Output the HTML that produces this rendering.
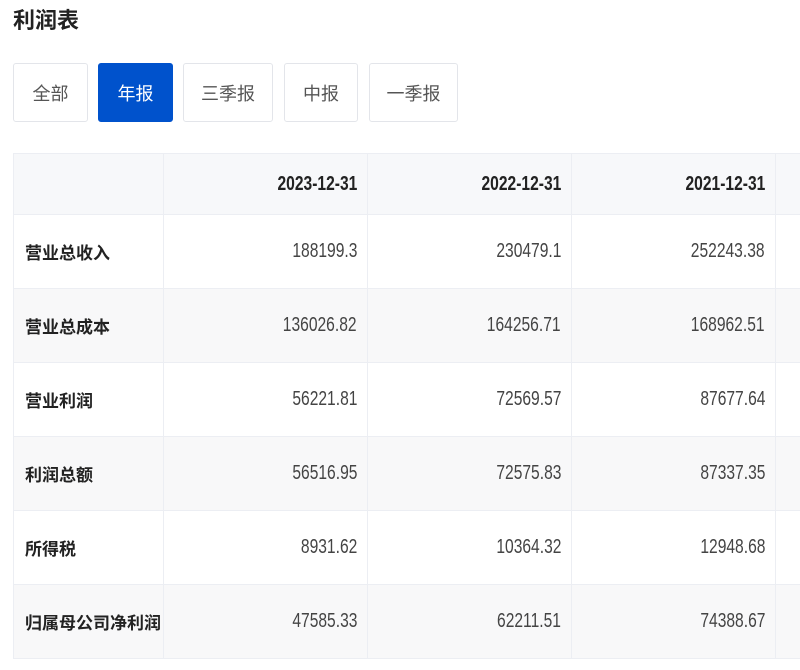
<!DOCTYPE html>
<html><head><meta charset="utf-8"><style>
body{margin:0;width:800px;height:670px;overflow:hidden;background:#fff;font-family:"Liberation Sans","Noto Sans CJK SC",sans-serif;color:#222;position:relative}
h1{position:absolute;left:13px;top:3px;margin:0;font-size:22px;font-weight:bold;color:#222}
.b{position:absolute;top:63px;border:1px solid #e3e5ea;border-radius:3px;box-sizing:border-box;height:59px;display:flex;align-items:center;justify-content:center;font-size:18px;color:#555}
.b.on{background:#0052cc;border-color:#0052cc;color:#fff}
table{position:absolute;left:13px;top:153px;border-collapse:collapse;table-layout:fixed;width:822px}
td{border:1px solid #eceef3;padding:0 10px;text-align:right;font-size:20px;color:#444;white-space:nowrap;overflow:hidden}
td span{display:inline-block;transform:scaleX(.78);transform-origin:right center}
tr.h td{height:60px;background:#f7f8fa;font-weight:bold;color:#222}
tr.r td{height:73px}
tr.g td{background:#f8f8f9}
td.l{text-align:left;font-weight:bold;color:#222;font-size:17px;padding-left:11px}
</style></head><body>
<h1>利润表</h1>
<div class="b" style="left:13px;width:75px">全部</div>
<div class="b on" style="left:98px;width:75px">年报</div>
<div class="b" style="left:183px;width:90px">三季报</div>
<div class="b" style="left:284px;width:74px">中报</div>
<div class="b" style="left:369px;width:89px">一季报</div>
<table>
<colgroup><col style="width:150px"><col style="width:204px"><col style="width:204px"><col style="width:204px"><col style="width:60px"></colgroup>
<tr class="h"><td class="l"></td><td><span>2023-12-31</span></td><td><span>2022-12-31</span></td><td><span>2021-12-31</span></td><td></td></tr>
<tr class="r"><td class="l">营业总收入</td><td><span>188199.3</span></td><td><span>230479.1</span></td><td><span>252243.38</span></td><td></td></tr>
<tr class="r g"><td class="l">营业总成本</td><td><span>136026.82</span></td><td><span>164256.71</span></td><td><span>168962.51</span></td><td></td></tr>
<tr class="r"><td class="l">营业利润</td><td><span>56221.81</span></td><td><span>72569.57</span></td><td><span>87677.64</span></td><td></td></tr>
<tr class="r g"><td class="l">利润总额</td><td><span>56516.95</span></td><td><span>72575.83</span></td><td><span>87337.35</span></td><td></td></tr>
<tr class="r"><td class="l">所得税</td><td><span>8931.62</span></td><td><span>10364.32</span></td><td><span>12948.68</span></td><td></td></tr>
<tr class="r g"><td class="l">归属母公司净利润</td><td><span>47585.33</span></td><td><span>62211.51</span></td><td><span>74388.67</span></td><td></td></tr>
</table>
</body></html>
